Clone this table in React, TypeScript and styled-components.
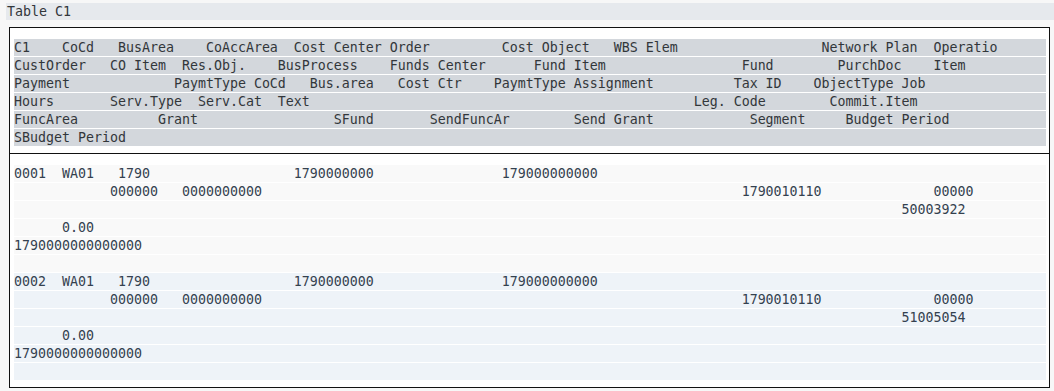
import React from "react";
import styled, { createGlobalStyle } from "styled-components";

const GlobalStyle = createGlobalStyle`
  html, body {
    margin: 0;
    padding: 0;
    background: #f7f7f7;
  }
  body {
    font-family: "DejaVu Sans Mono", "Liberation Mono", monospace;
  }
`;

const Page = styled.div`
  display: flex;
  flex-direction: column;
  padding: 3px 0 4px 6px;
  font-family: "DejaVu Sans Mono", "Liberation Mono", monospace;
  font-size: 13.29px;
`;

const TitleBar = styled.div`
  height: 17px;
  line-height: 17px;
  padding-left: 1px;
  background: #e6e9ed;
  color: #32363a;
  white-space: pre;
`;

const Frame = styled.div`
  margin: 7px 4px 0 3px;
  border: 1px solid #111;
  background: #ffffff;
  display: flex;
  flex-direction: column;
`;

const Section = styled.div<{ $divider?: boolean }>`
  display: flex;
  flex-direction: column;
  padding: 11px 3px 6px 4px;
  border-bottom: ${(p) => (p.$divider ? "1px solid #111" : "none")};
`;

const Line = styled.div<{ $bg: string; $fg: string }>`
  height: 17px;
  line-height: 17px;
  margin-bottom: 1px;
  background: ${(p) => p.$bg};
  color: ${(p) => p.$fg};
  white-space: pre;
  overflow: hidden;
`;

type Field = [number, string];

const layout = (fields: Field[]): string => {
  let s = "";
  for (const [col, text] of fields) {
    while (s.length < col) s += " ";
    s += text;
  }
  return s;
};

const headerLines: Field[][] = [
  [[0, "C1"], [6, "CoCd"], [13, "BusArea"], [24, "CoAccArea"], [35, "Cost Center Order"], [61, "Cost Object"], [75, "WBS Elem"], [101, "Network Plan"], [115, "Operatio"]],
  [[0, "CustOrder"], [12, "CO Item"], [21, "Res.Obj."], [33, "BusProcess"], [47, "Funds Center"], [65, "Fund Item"], [91, "Fund"], [103, "PurchDoc"], [115, "Item"]],
  [[0, "Payment"], [20, "PaymtType CoCd"], [37, "Bus.area"], [48, "Cost Ctr"], [60, "PaymtType Assignment"], [90, "Tax ID"], [100, "ObjectType Job"]],
  [[0, "Hours"], [12, "Serv.Type"], [23, "Serv.Cat"], [33, "Text"], [85, "Leg. Code"], [102, "Commit.Item"]],
  [[0, "FuncArea"], [18, "Grant"], [40, "SFund"], [52, "SendFuncAr"], [70, "Send Grant"], [92, "Segment"], [104, "Budget Period"]],
  [[0, "SBudget Period"]],
];

const records = [
  { id: "0001", doc: "50003922" },
  { id: "0002", doc: "51005054" },
];

const recordLines = (id: string, doc: string): Field[][] => [
  [[0, id], [6, "WA01"], [13, "1790"], [35, "1790000000"], [61, "179000000000"]],
  [[12, "000000"], [21, "0000000000"], [91, "1790010110"], [115, "00000"]],
  [[111, doc]],
  [[6, "0.00"]],
  [[0, "1790000000000000"]],
  [],
];

const recordBg = ["#f9f9f9", "#eef3f8"];

export default function App() {
  return (
    <>
      <GlobalStyle />
      <Page>
        <TitleBar>Table C1</TitleBar>
        <Frame>
          <Section $divider>
            {headerLines.map((f, i) => (
              <Line key={i} $bg="#d3d7dc" $fg="#32363a">
                {layout(f)}
              </Line>
            ))}
          </Section>
          <Section>
            {records.map((r, ri) =>
              recordLines(r.id, r.doc).map((f, i) => (
                <Line key={`${ri}-${i}`} $bg={recordBg[ri % 2]} $fg="#34414f">
                  {layout(f)}
                </Line>
              ))
            )}
          </Section>
        </Frame>
      </Page>
    </>
  );
}
